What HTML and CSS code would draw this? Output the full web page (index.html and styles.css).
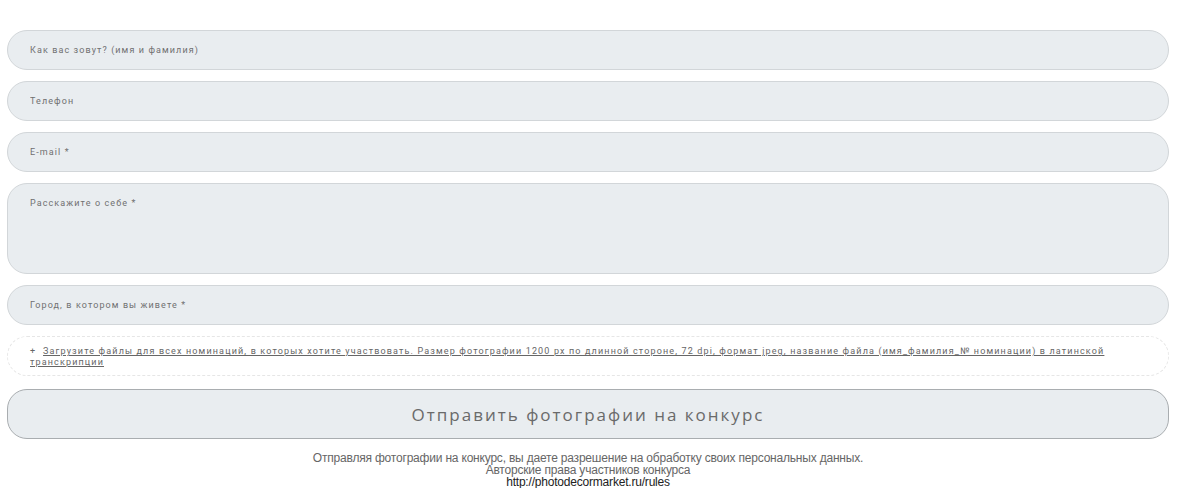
FILE: index.html
```html
<!DOCTYPE html>
<html lang="ru">
<head>
<meta charset="utf-8">
<link rel="stylesheet" href="styles.css">
</head>
<body>
<form class="form">
  <input class="field" type="text" placeholder="Как вас зовут? (имя и фамилия)">
  <input class="field" type="text" placeholder="Телефон">
  <input class="field" type="text" placeholder="E-mail *">
  <textarea class="field area" placeholder="Расскажите о себе *"></textarea>
  <input class="field" type="text" placeholder="Город, в котором вы живете *">
  <div class="upload">
    <p class="upload-text">+&nbsp; <a class="upload-link" href="#">Загрузите файлы для всех номинаций, в которых хотите участвовать. Размер фотографии 1200 px по длинной стороне, 72 dpi, формат jpeg, название файла (имя_фамилия_№ номинации) в латинской транскрипции</a></p>
  </div>
  <button class="submit" type="button">Отправить фотографии на конкурс</button>
  <div class="note">
    <div class="note-line">Отправляя фотографии на конкурс, вы даете разрешение на обработку своих персональных данных.</div>
    <div class="note-line">Авторские права участников конкурса</div>
    <div class="note-line dark">http://photodecormarket.ru/rules</div>
  </div>
</form>
</body>
</html>
```
FILE: styles.css
```css
html, body {
  margin: 0;
  padding: 0;
  background: #ffffff;
}
.form {
  width: 1162px;
  margin: 0 0 0 7px;
  padding-top: 30px;
  display: flex;
  flex-direction: column;
  gap: 11px;
}
.field {
  box-sizing: border-box;
  display: block;
  width: 100%;
  height: 40px;
  margin: 0;
  padding: 0 22px;
  border: 1px solid #d2d6d9;
  border-radius: 20px;
  background: #e9edf0;
  font-family: Roboto, "Liberation Sans", sans-serif;
  font-size: 9px;
  letter-spacing: 1.1px;
  color: #666;
  outline: none;
}
.field::placeholder {
  color: #707070;
  opacity: 1;
}
.area {
  height: 91px;
  padding-top: 14px;
  resize: none;
}
.upload {
  box-sizing: border-box;
  height: 40px;
  padding: 9px 22px 0;
  border: 1px dashed #e6e6e6;
  border-radius: 20px;
}
.upload-text {
  margin: 0;
  font-family: Roboto, "Liberation Sans", sans-serif;
  font-size: 9px;
  letter-spacing: 1.15px;
  line-height: 11px;
  color: #666;
}
.upload-link {
  color: #666;
  text-decoration: underline;
}
.submit {
  box-sizing: border-box;
  width: 100%;
  height: 50px;
  margin-top: 2px;
  border: 1px solid #a9adb0;
  border-radius: 20px;
  background: #e9edf0;
  font-family: "Open Sans", "Liberation Sans", sans-serif;
  font-size: 17px;
  letter-spacing: 2px;
  color: #6a6a6a;
  cursor: pointer;
}
.note {
  margin-top: 2px;
  text-align: center;
  font-family: "Liberation Sans", Arial, sans-serif;
  font-size: 12px;
  line-height: 12px;
  color: #666;
  letter-spacing: -0.2px;
}
.note-line.dark {
  color: #222;
}
```
